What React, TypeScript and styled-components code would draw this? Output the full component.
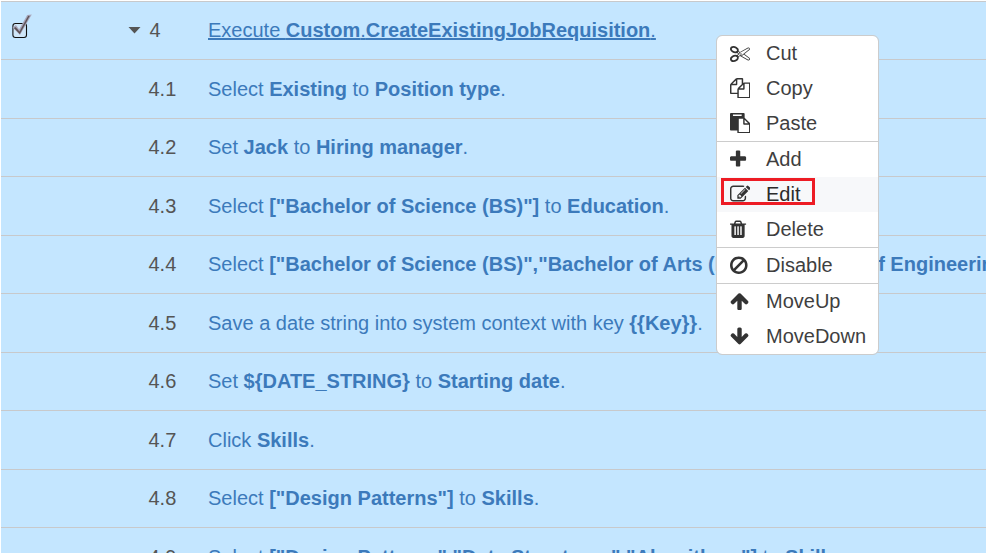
import React from "react";
import styled, { createGlobalStyle } from "styled-components";

const GlobalStyle = createGlobalStyle`
  * { box-sizing: border-box; }
  html, body { margin: 0; height: 553px; overflow: hidden; background: #fff; }
  body { font-family: "Liberation Sans", Arial, sans-serif; font-size: 20px; color: #555; }
`;

const Page = styled.main`
  position: relative;
  width: 986px;
  height: 553px;
  overflow: hidden;
  padding: 1px 0 0 1px;
`;

const StepRow = styled.div<{ $tall: boolean }>`
  display: grid;
  grid-template-columns: 127px 20px 60px 1fr;
  align-items: center;
  height: ${(p) => (p.$tall ? 59 : 58)}px;
  padding-top: ${(p) => (p.$tall ? 1 : 0)}px;
  border-top: 1px solid #c8c9cb;
  background: #c4e6ff;
  white-space: nowrap;
`;

const CheckCell = styled.div`
  padding-left: 10px;
  height: 34px;
  svg { display: block; }
`;

const CaretCell = styled.div`
  display: flex;
  svg { display: block; }
`;

const StepNumber = styled.span<{ $indent?: boolean }>`
  color: #555;
  font-size: 20px;
  padding-left: ${(p) => (p.$indent ? 1.5 : 0.5)}px;
`;

const StepText = styled.a<{ $underlined?: boolean }>`
  color: #3c7abb;
  font-size: 20px;
  text-decoration: ${(p) => (p.$underlined ? "underline" : "none")};
`;

const Menu = styled.ul`
  position: absolute;
  left: 716px;
  top: 35px;
  width: 163px;
  margin: 0;
  padding: 0;
  list-style: none;
  border: 1px solid #ccc;
  border-radius: 6px;
  background: #fff;
  background-clip: padding-box;
`;

const MenuItem = styled.li<{ $active?: boolean; $divided?: boolean }>`
  position: relative;
  display: flex;
  align-items: center;
  height: ${(p) => (p.$divided ? 36 : 35)}px;
  padding-left: 12.5px;
  border-top: ${(p) => (p.$divided ? "1px solid #ccc" : "0")};
  background: ${(p) => (p.$active ? "#f7f8fa" : "transparent")};
  color: ${(p) => (p.$active ? "#2b2b2b" : "#3f3f3f")};
`;

const MenuIcon = styled.svg`
  width: 20.5px;
  height: 20.5px;
  margin: 0 16px 1.5px 0;
  fill: #333;
`;

const Highlight = styled.span`
  position: absolute;
  left: 4px;
  top: 1px;
  width: 94px;
  height: 27px;
  border: 3px solid #ed1c24;
`;

type Part = string | { b: string };
const b = (text: string): Part => ({ b: text });

const steps: { n: string; parts: Part[] }[] = [
  { n: "4", parts: ["Execute ", b("Custom"), ".", b("CreateExistingJobRequisition"), "."] },
  { n: "4.1", parts: ["Select ", b("Existing"), " to ", b("Position type"), "."] },
  { n: "4.2", parts: ["Set ", b("Jack"), " to ", b("Hiring manager"), "."] },
  { n: "4.3", parts: ["Select ", b('["Bachelor of Science (BS)"]'), " to ", b("Education"), "."] },
  {
    n: "4.4",
    parts: ["Select ", b('["Bachelor of Science (BS)","Bachelor of Arts (BA)","Bachelor of Engineering (BE)"]'), " to ", b("Education"), "."],
  },
  { n: "4.5", parts: ["Save a date string into system context with key ", b("{{Key}}"), "."] },
  { n: "4.6", parts: ["Set ", b("${DATE_STRING}"), " to ", b("Starting date"), "."] },
  { n: "4.7", parts: ["Click ", b("Skills"), "."] },
  { n: "4.8", parts: ["Select ", b('["Design Patterns"]'), " to ", b("Skills"), "."] },
  { n: "4.9", parts: ["Select ", b('["Design Patterns","Data Structures","Algorithms"]'), " to ", b("Skills"), "."] },
];

const icons = {
  cut: "M960 896q26 0 45 19t19 45-19 45-45 19-45-19-19-45 19-45 45-19zm300 64l507 398q28 20 25 56-5 35-35 51l-128 64q-13 7-29 7-17 0-31-8l-690-387-110 66q-8 4-12 5 14 49 10 97-7 77-56 147.5t-132 123.5q-132 84-277 84-136 0-222-78-90-84-79-207 7-76 56-147t131-124q132-84 278-84 83 0 151 31 9-13 22-22l122-73-122-73q-13-9-22-22-68 31-151 31-146 0-278-84-82-53-131-124t-56-147q-5-59 15.5-113t63.5-93q85-79 222-79 145 0 277 84 83 52 132 123t56 148q4 48-10 97 4 1 12 5l110 66 690-387q14-8 31-8 16 0 29 7l128 64q30 16 35 51 3 36-25 56zm-681-260q46-42 21-108t-106-117q-92-59-192-59-74 0-113 36-46 42-21 108t106 117q92 59 192 59 74 0 113-36zm-85 745q81-51 106-117t-21-108q-39-36-113-36-100 0-192 59-81 51-106 117t21 108q39 36 113 36 100 0 192-59zm178-613l96 58v-11q0-36 33-56l14-8-79-44-26 26q-3 3-10 11t-12 12q-2 2-4 3.5t-3 2.5zm224 224l96 32 736-576-128-64-768 431v113l-160 96 9 8q2 2 7 6 4 4 11 12t11 12l26 26zm704 416l128-64-520-408-177 138q-2 3-13 7z",
  copy: "M1696 384q40 0 68 28t28 68v1216q0 40-28 68t-68 28h-960q-40 0-68-28t-28-68v-288h-544q-40 0-68-28t-28-68v-672q0-40 20-88t48-76l408-408q28-28 76-48t88-20h416q40 0 68 28t28 68v328q68-40 128-40h416zm-544 213l-299 299h299v-299zm-640-384l-299 299h299v-299zm196 647l316-316v-416h-384v416q0 40-28 68t-68 28h-416v640h512v-256q0-40 20-88t48-76zm956 804v-1152h-384v416q0 40-28 68t-68 28h-416v640h896z",
  paste: "M768 1664h896v-640h-416q-40 0-68-28t-28-68v-416h-384v1152zm256-1440v-64q0-13-9.5-22.5t-22.5-9.5h-704q-13 0-22.5 9.5t-9.5 22.5v64q0 13 9.5 22.5t22.5 9.5h704q13 0 22.5-9.5t9.5-22.5zm256 672h299l-299-299v299zm512 128v672q0 40-28 68t-68 28h-960q-40 0-68-28t-28-68v-160h-544q-40 0-68-28t-28-68v-1344q0-40 28-68t68-28h1088q40 0 68 28t28 68v328q21 13 36 28l408 408q28 28 48 76t20 88z",
  plus: "M1600 736v192q0 40-28 68t-68 28h-416v416q0 40-28 68t-68 28h-192q-40 0-68-28t-28-68v-416h-416q-40 0-68-28t-28-68v-192q0-40 28-68t68-28h416v-416q0-40 28-68t68-28h192q40 0 68 28t28 68v416h416q40 0 68 28t28 68z",
  edit: "M888 1184l116-116-152-152-116 116v56h96v96h56zm440-720q-16-16-33 1l-350 350q-17 17-1 33t33-1l350-350q17-17 1-33zm80 594v190q0 119-84.5 203.5t-203.5 84.5h-832q-119 0-203.5-84.5t-84.5-203.5v-832q0-119 84.5-203.5t203.5-84.5h832q63 0 117 25 15 7 18 23 3 17-9 29l-49 49q-14 14-32 8-23-6-45-6h-832q-66 0-113 47t-47 113v832q0 66 47 113t113 47h832q66 0 113-47t47-113v-126q0-13 9-22l64-64q15-15 35-7t20 29zm-96-738l288 288-672 672h-288v-288zm444 132l-92 92-288-288 92-92q28-28 68-28t68 28l152 152q28 28 28 68t-28 68z",
  trash: "M704 1376v-704q0-14-9-23t-23-9h-64q-14 0-23 9t-9 23v704q0 14 9 23t23 9h64q14 0 23-9t9-23zm256 0v-704q0-14-9-23t-23-9h-64q-14 0-23 9t-9 23v704q0 14 9 23t23 9h64q14 0 23-9t9-23zm256 0v-704q0-14-9-23t-23-9h-64q-14 0-23 9t-9 23v704q0 14 9 23t23 9h64q14 0 23-9t9-23zm-544-992h448l-48-117q-7-9-17-11h-317q-10 2-17 11zm928 32v64q0 14-9 23t-23 9h-96v948q0 83-47 143.5t-113 60.5h-832q-66 0-113-58.5t-47-141.5v-952h-96q-14 0-23-9t-9-23v-64q0-14 9-23t23-9h309l70-167q15-37 54-63t79-26h320q40 0 79 26t54 63l70 167h309q14 0 23 9t9 23z",
  ban: "M1440 893q0-161-87-295l-754 753q137 89 297 89 111 0 211.5-43.5t173.5-116.5 116-174.5 43-212.5zm-999 299l755-754q-135-91-300-91-148 0-273 73t-198 199-73 274q0 162 89 299zm1223-299q0 157-61 300t-163.5 246-245 164-298.5 61-298.5-61-245-164-163.5-246-61-300 61-299.5 163.5-245.5 245-164 298.5-61 298.5 61 245 164 163.5 245.5 61 299.5z",
  up: "M1675 971q0 51-37 90l-75 75q-38 38-91 38-54 0-90-38l-294-293v704q0 52-37.5 84.5t-90.5 32.5h-128q-53 0-90.5-32.5t-37.5-84.5v-704l-294 293q-36 38-90 38t-90-38l-75-75q-38-38-38-90 0-53 38-91l651-651q35-37 90-37 54 0 91 37l651 651q37 39 37 91z",
  down: "M1675 832q0 53-37 90l-651 652q-39 37-91 37-53 0-90-37l-651-652q-38-36-38-90 0-53 38-91l74-75q39-37 91-37 53 0 90 37l294 294v-704q0-52 38-90t90-38h128q52 0 90 38t38 90v704l294-294q37-37 90-37 52 0 91 37l75 75q37 39 37 91z",
};

const menuItems: { label: string; icon: keyof typeof icons; inset: number; divided?: boolean; active?: boolean }[] = [
  { label: "Cut", icon: "cut", inset: 0 },
  { label: "Copy", icon: "copy", inset: 0 },
  { label: "Paste", icon: "paste", inset: 0 },
  { label: "Add", icon: "plus", inset: 192, divided: true },
  { label: "Edit", icon: "edit", inset: 0, active: true },
  { label: "Delete", icon: "trash", inset: 192 },
  { label: "Disable", icon: "ban", inset: 128, divided: true },
  { label: "MoveUp", icon: "up", inset: 64, divided: true },
  { label: "MoveDown", icon: "down", inset: 64 },
];

function CheckedBox() {
  return (
    <svg width="24" height="28" viewBox="0 0 24 28" aria-label="Selected">
      <rect x="1.9" y="9.5" width="13.6" height="14" rx="2.5" fill="#cfe6f8" stroke="#111" strokeWidth="1.1" />
      <path d="M2.6 13.5L4.8 12L8.2 16.6L16.6 1.6L19.6 1.2L8.8 20Z" fill="#aaa9bd" stroke="#aaa9bd" strokeWidth="1.3" />
      <path d="M3.2 13.9L4.8 13.4L8.5 18L17.4 2L18.4 2L8.7 19.8Z" fill="#5b4f52" stroke="#5b4f52" strokeWidth="0.5" />
    </svg>
  );
}

export default function App() {
  return (
    <>
      <GlobalStyle />
      <Page>
        {steps.map((step, i) => (
          <StepRow key={step.n} $tall={i % 2 === 1}>
            <CheckCell>{i === 0 && <CheckedBox />}</CheckCell>
            <CaretCell>
              {i === 0 && (
                <svg width="13" height="7" viewBox="0 0 13 7">
                  <path d="M.5 0H12.5L6.5 6.5Z" fill="#555" />
                </svg>
              )}
            </CaretCell>
            <StepNumber $indent={i === 0}>{step.n}</StepNumber>
            <StepText $underlined={i === 0}>
              {step.parts.map((part, k) =>
                typeof part === "string" ? <React.Fragment key={k}>{part}</React.Fragment> : <b key={k}>{part.b}</b>
              )}
            </StepText>
          </StepRow>
        ))}
        <Menu>
          {menuItems.map((item) => (
            <MenuItem key={item.label} $active={item.active} $divided={item.divided}>
              <MenuIcon viewBox={`${item.inset} 0 1792 1792`}>
                <path d={icons[item.icon]} />
              </MenuIcon>
              {item.label}
              {item.active && <Highlight />}
            </MenuItem>
          ))}
        </Menu>
      </Page>
    </>
  );
}
